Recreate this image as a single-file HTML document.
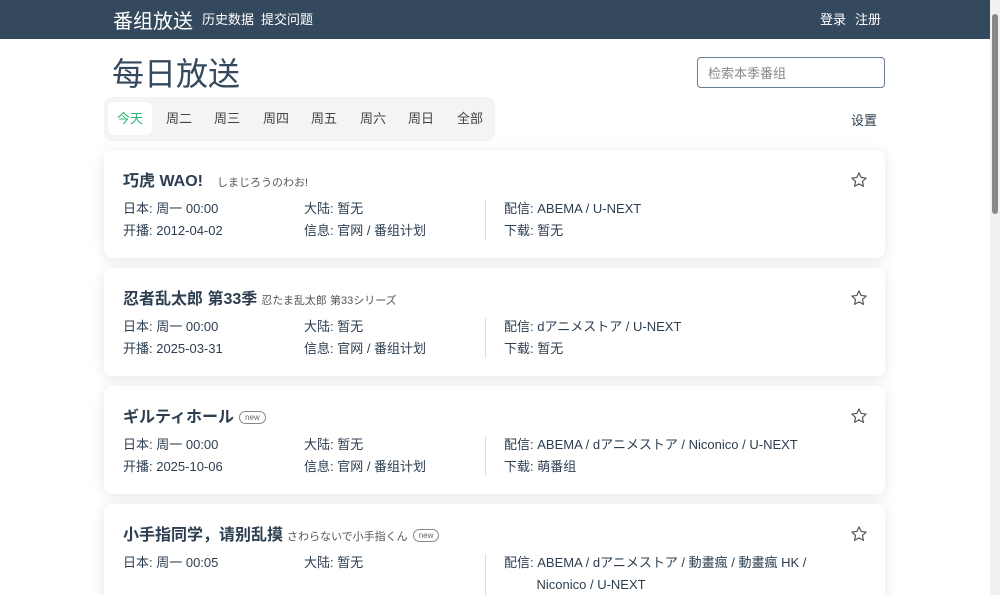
<!DOCTYPE html>
<html style="height:595px;overflow:hidden"><head><meta charset="utf-8"><style>
*{box-sizing:border-box;margin:0;padding:0}
body{width:1000px;height:595px;overflow:hidden;background:#fff;font-family:"Liberation Sans","Noto Sans CJK SC",sans-serif;color:#2c3e50;position:relative}
.nav{position:absolute;left:0;top:0;width:990px;height:39px;background:#35495e;color:#fff}
.nav .b{position:absolute;left:113px;top:5px;font-size:20px}
.nav .l{position:absolute;top:9px;font-size:13px}
.sb{position:absolute;left:990px;top:0;width:10px;height:595px;background:#f1f1f1}
.sb div{position:absolute;left:2px;top:14px;width:6px;height:200px;background:#888;border-radius:3px}
h1{position:absolute;left:112px;top:49px;font-size:32px;font-weight:normal;color:#34495e}
.search{position:absolute;left:697px;top:57px;width:188px;height:31px;border:1px solid #6b7c8e;border-radius:4px;font-size:13px;color:#888;padding:5px 10px}
.tabs{position:absolute;left:104px;top:97px;width:391px;height:44px;background:#f3f4f6;border-radius:8px}
.tab{position:absolute;top:5px;height:33px;line-height:33px;font-size:13px;color:#444;text-align:center;width:44px}
.tab.a{background:#fff;color:#2bb673;border-radius:7px}
.set{position:absolute;left:851px;top:110px;font-size:13px}
.card{position:absolute;left:104px;width:781px;height:108px;background:#fff;border-radius:8px;box-shadow:0 2px 14px rgba(0,0,0,.1)}
.t{position:absolute;left:19px;top:17px;font-size:16px;font-weight:bold;white-space:nowrap}
.t small{font-size:11px;font-weight:normal;color:#555;margin-left:6px}
.new{display:inline-block;font-size:8px;font-weight:normal;color:#666;border:1px solid #888;border-radius:8px;padding:1px 5px;margin-left:5px;vertical-align:2px}
.c{position:absolute;font-size:13px;line-height:22px;white-space:nowrap}
.dv{position:absolute;left:381px;top:50px;width:1px;height:40px;background:#ddd}
.star{position:absolute;left:746px;top:21px}
</style></head><body>
<div class="nav"><span class="b">番组放送</span><span class="l" style="left:202px">历史数据</span><span class="l" style="left:261px">提交问题</span><span class="l" style="left:820px">登录</span><span class="l" style="left:855px">注册</span></div>
<div class="sb"><div></div></div>
<h1>每日放送</h1>
<div class="search">检索本季番组</div>
<div class="tabs">
<div class="tab a" style="left:4px">今天</div><div class="tab" style="left:53px">周二</div><div class="tab" style="left:101px">周三</div><div class="tab" style="left:150px">周四</div><div class="tab" style="left:198px">周五</div><div class="tab" style="left:247px">周六</div><div class="tab" style="left:295px">周日</div><div class="tab" style="left:344px">全部</div>
</div>
<div class="set">设置</div>

<div class="card" style="top:150px"><div class="t">巧虎 WAO!<small style="margin-left:14px">しまじろうのわお!</small></div>
<div class="c" style="left:19px;top:48px">日本: 周一 00:00<br>开播: 2012-04-02</div>
<div class="c" style="left:200px;top:48px">大陆: 暂无<br>信息: 官网 / 番组计划</div><div class="dv"></div>
<div class="c" style="left:400px;top:48px">配信: ABEMA / U-NEXT<br>下载: 暂无</div>
<svg class="star" width="18" height="18" viewBox="0 0 24 24"><path d="M12 2.5l2.9 6.1 6.6.8-4.9 4.5 1.3 6.6L12 17.2l-5.9 3.3 1.3-6.6-4.9-4.5 6.6-.8z" fill="none" stroke="#555" stroke-width="1.6" stroke-linejoin="round"/></svg></div>

<div class="card" style="top:268px"><div class="t">忍者乱太郎 第33季<small style="margin-left:4px">忍たま乱太郎 第33シリーズ</small></div>
<div class="c" style="left:19px;top:48px">日本: 周一 00:00<br>开播: 2025-03-31</div>
<div class="c" style="left:200px;top:48px">大陆: 暂无<br>信息: 官网 / 番组计划</div><div class="dv"></div>
<div class="c" style="left:400px;top:48px">配信: dアニメストア / U-NEXT<br>下载: 暂无</div>
<svg class="star" width="18" height="18" viewBox="0 0 24 24"><path d="M12 2.5l2.9 6.1 6.6.8-4.9 4.5 1.3 6.6L12 17.2l-5.9 3.3 1.3-6.6-4.9-4.5 6.6-.8z" fill="none" stroke="#555" stroke-width="1.6" stroke-linejoin="round"/></svg></div>

<div class="card" style="top:386px"><div class="t">ギルティホール<span class="new">new</span></div>
<div class="c" style="left:19px;top:48px">日本: 周一 00:00<br>开播: 2025-10-06</div>
<div class="c" style="left:200px;top:48px">大陆: 暂无<br>信息: 官网 / 番组计划</div><div class="dv"></div>
<div class="c" style="left:400px;top:48px">配信: ABEMA / dアニメストア / Niconico / U-NEXT<br>下载: 萌番组</div>
<svg class="star" width="18" height="18" viewBox="0 0 24 24"><path d="M12 2.5l2.9 6.1 6.6.8-4.9 4.5 1.3 6.6L12 17.2l-5.9 3.3 1.3-6.6-4.9-4.5 6.6-.8z" fill="none" stroke="#555" stroke-width="1.6" stroke-linejoin="round"/></svg></div>

<div class="card" style="top:504px;height:120px"><div class="t">小手指同学，请别乱摸<small style="margin-left:4px">さわらないで小手指くん</small><span class="new">new</span></div>
<div class="c" style="left:19px;top:48px">日本: 周一 00:05</div>
<div class="c" style="left:200px;top:48px">大陆: 暂无</div><div class="dv" style="height:60px"></div>
<div class="c" style="left:400px;top:48px">配信: ABEMA / dアニメストア / 動畫瘋 / 動畫瘋 HK /<br>&nbsp;&nbsp;&nbsp;&nbsp;&nbsp;&nbsp;&nbsp;&nbsp;&nbsp;Niconico / U-NEXT</div>
<svg class="star" width="18" height="18" viewBox="0 0 24 24"><path d="M12 2.5l2.9 6.1 6.6.8-4.9 4.5 1.3 6.6L12 17.2l-5.9 3.3 1.3-6.6-4.9-4.5 6.6-.8z" fill="none" stroke="#555" stroke-width="1.6" stroke-linejoin="round"/></svg></div>
</body></html>
